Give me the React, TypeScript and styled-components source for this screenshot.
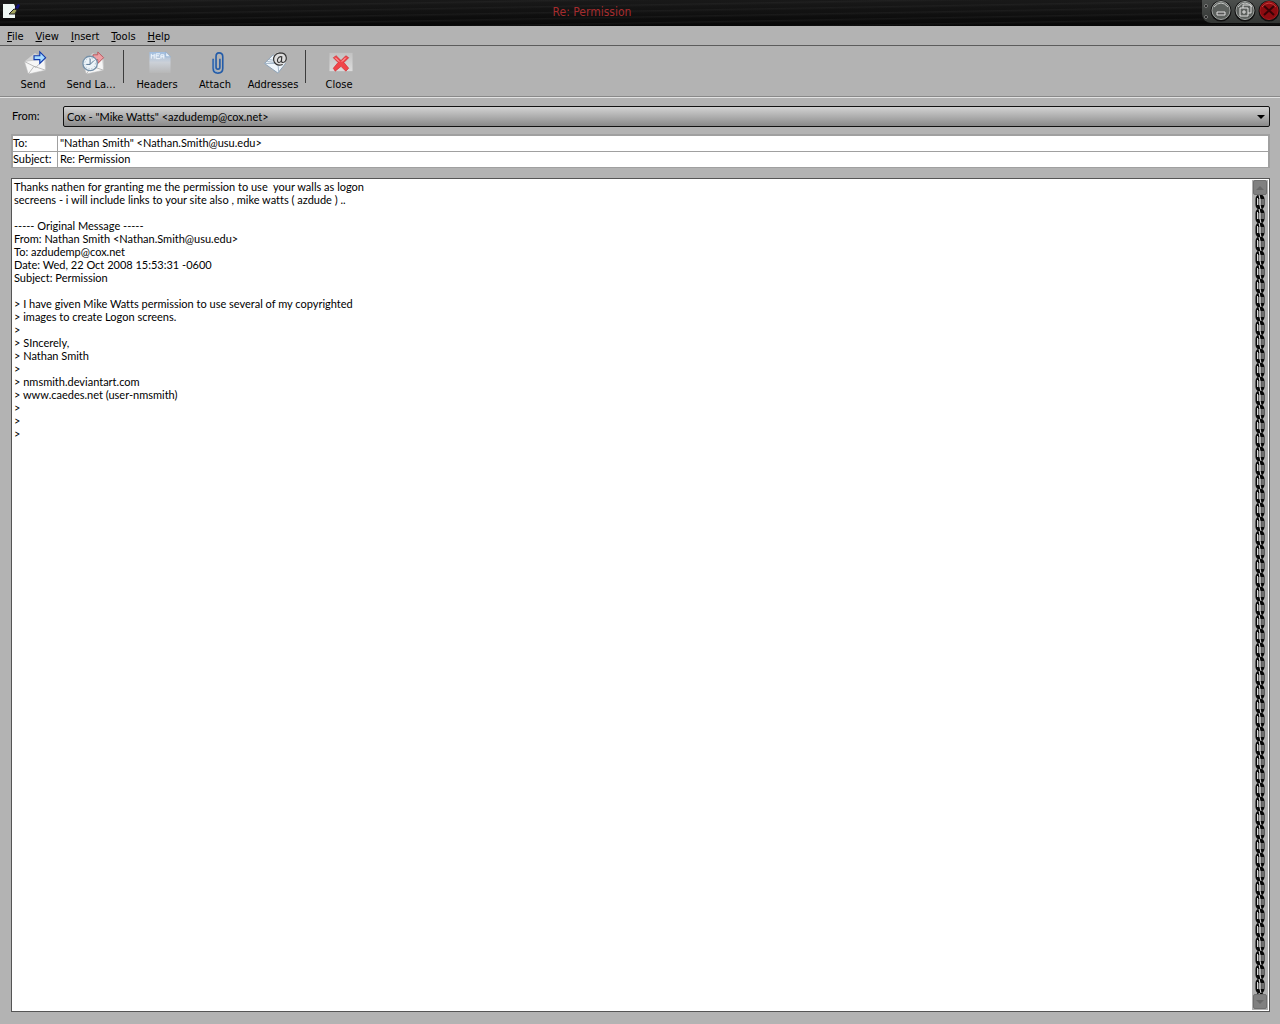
import React from "react";
import styled, { createGlobalStyle } from "styled-components";

const uiFont = `"DejaVu Sans Condensed", "DejaVu Sans", sans-serif`;
const textFont = `Lato, "Liberation Sans", Arial, sans-serif`;

const GlobalStyle = createGlobalStyle`
  * { box-sizing: border-box; }
  body { margin: 0; background: #b3b3b3; color: #000; font: 11px/13px ${textFont}; }
  button, input, select, textarea { font: inherit; color: inherit; margin: 0; border-radius: 0; }
`;

const Window = styled.div`
  display: flex;
  flex-direction: column;
  min-height: 100vh;
  background: #b3b3b3;
`;

const TitleBar = styled.header`
  display: grid;
  grid-template-columns: 78px 1fr 78px;
  height: 26px;
  background:
    repeating-linear-gradient(179deg, transparent 0 3px, rgba(60, 60, 60, 0.22) 4px, transparent 6px),
    linear-gradient(#191919, #111 50%, #060606);
`;

const AppIcon = styled.svg`
  width: 20px;
  height: 20px;
  margin: 1px 0 0 2px;
`;

const Title = styled.h1`
  margin: 0;
  padding-right: 96px;
  text-align: center;
  font: 12px/24px ${uiFont};
  color: #a62c2e;
`;

const WindowControls = styled.div`
  display: flex;
  align-items: flex-start;
  height: 23px;
  overflow: hidden;
  background: linear-gradient(#4c4f4d, #333634);
  border-bottom-left-radius: 9px;
`;

const Rivets = styled.svg`
  width: 7px;
  height: 22px;
  flex: none;
`;

const ControlButton = styled.button`
  width: 24px;
  height: 22px;
  padding: 0;
  border: 0;
  background: none;
  flex: none;
  svg { display: block; width: 24px; height: 22px; }
`;

const MenuBar = styled.nav`
  display: flex;
  gap: 12px;
  height: 20px;
  padding: 3px 7px 0;
  border-bottom: 1px solid #5c5c5c;
`;

const MenuItem = styled.button`
  padding: 0;
  border: 0;
  background: none;
  font: 11px/16px ${uiFont};
`;

const ToolBar = styled.div`
  display: flex;
  height: 52px;
  padding: 4px;
  border-bottom: 1px solid #e2e2e2;
  box-shadow: inset 0 -1px #898989;
`;

const Tool = styled.button`
  display: flex;
  flex-direction: column;
  align-items: center;
  gap: 2px;
  width: 58px;
  padding: 0;
  border: 0;
  background: none;
  font: 11px/16px ${uiFont};
  white-space: nowrap;
  svg { width: 26px; height: 26px; margin-left: 4px; }
`;

const Divider = styled.div`
  width: 1px;
  height: 33px;
  margin: 0 4px 0 3px;
  background: #3c3c3c;
`;

const Composer = styled.main`
  flex: 1;
  display: flex;
  flex-direction: column;
  padding: 8px 10px 12px 11px;
  font-variant-ligatures: none;
`;

const FromRow = styled.div`
  display: flex;
  align-items: flex-start;
  height: 21px;
  label { width: 52px; padding-left: 1px; line-height: 19px; }
`;

const SelectBox = styled.div`
  flex: 1;
  position: relative;
  svg { position: absolute; right: 5px; top: 9px; width: 8px; height: 4px; pointer-events: none; }
`;

const Select = styled.select`
  display: block;
  width: 100%;
  height: 21px;
  padding: 0 20px 1px 3px;
  appearance: none;
  border: 1px solid #111;
  border-radius: 2px;
  background: linear-gradient(#d2d2d2, #b2b2b2 45%, #8a8a8a);
`;

const Fields = styled.div`
  display: grid;
  grid-template-columns: 44px 1fr;
  grid-auto-rows: 15px;
  gap: 1px;
  margin-top: 7px;
  border: 2px solid #a0a0a0;
  border-width: 2px 2px 1px;
  background: #a0a0a0;
  label { background: #fff; line-height: 13px; }
`;

const Field = styled.input`
  min-width: 0;
  height: 15px;
  padding: 0 2px 2px;
  border: 0;
  outline: 0;
  background: #fff;
  line-height: 13px;
`;

const Editor = styled.div`
  flex: 1;
  display: flex;
  margin-top: 10px;
  padding: 1px;
  border: 1px solid #555;
  background: #fff;
`;

const Message = styled.textarea`
  flex: 1;
  min-width: 0;
  padding: 0 1px;
  border: 0;
  outline: 0;
  resize: none;
  overflow: hidden;
  background: #fff;
  line-height: 13px;
`;

const ScrollBar = styled.div`
  display: flex;
  flex-direction: column;
  width: 16px;
  padding-bottom: 1px;
  background: #b0b0b0;
`;

const ScrollButton = styled.button`
  height: 15px;
  padding: 0;
  border: 1px solid #707070;
  border-radius: 2px;
  background: #808080;
  margin: 0 1px;
  svg { display: block; width: 8px; height: 4px; margin: auto; }
`;

const Chain = styled.svg`
  flex: 1;
  width: 16px;
  min-height: 0;
`;

const message = `Thanks nathen for granting me the permission to use  your walls as logon
secreens - i will include links to your site also , mike watts ( azdude ) ..

----- Original Message -----
From: Nathan Smith <Nathan.Smith@usu.edu>
To: azdudemp@cox.net
Date: Wed, 22 Oct 2008 15:53:31 -0600
Subject: Permission

> I have given Mike Watts permission to use several of my copyrighted
> images to create Logon screens.
>
> SIncerely,
> Nathan Smith
>
> nmsmith.deviantart.com
> www.caedes.net (user-nmsmith)
>
>
>`;

const Envelope = () => (
  <>
    <path d="m2 12 11-9 11 7v8z" fill="#d3d3d3" />
    <path d="m2 12 21-3 1 12-18 4z" fill="#f6f6f6" stroke="#bcbcbc" strokeWidth=".6" />
    <path d="m2 12 12 6 9-9M6 25l6-8 12 4" fill="none" stroke="#aaa" strokeWidth=".8" />
  </>
);

const SendIcon = () => (
  <svg viewBox="0 0 26 26" aria-hidden="true">
    <Envelope />
    <path d="M12 6h6V2l6 6-6 6v-4h-6z" fill="#a9dcff" stroke="#1039ad" strokeWidth="1.2" />
  </svg>
);

const SendLaterIcon = () => (
  <svg viewBox="0 0 26 26" aria-hidden="true">
    <Envelope />
    <path d="M13 5h5V2l6 6-6 6v-4h-5z" fill="#eda0a5" stroke="#b9585f" />
    <circle cx="10" cy="14" r="7.5" fill="#edf4f9" stroke="#7590a8" strokeWidth="1.4" />
    <circle cx="10" cy="14" r="5.5" fill="none" stroke="#9fb4c6" strokeDasharray="1 2" />
    <path d="M10 9v6H6M10 15l4-4" fill="none" stroke="#52718f" />
  </svg>
);

const HeadersIcon = () => (
  <svg viewBox="0 0 26 26" aria-hidden="true">
    <defs>
      <linearGradient id="sheet" x2="0" y2="1">
        <stop stopColor="#9fbde0" /><stop offset=".5" stopColor="#cbd0d7" /><stop offset="1" stopColor="#b7b7b7" />
      </linearGradient>
    </defs>
    <path d="M3 2h17l5 5v17H3z" fill="url(#sheet)" />
    <path d="M20 2v5h5z" fill="#e8f1fa" stroke="#7ea2cb" strokeWidth=".6" />
    <path d="M5 4v5m0-3h3m0-2v5m6-5h-4v5h4m-4-3h3m2 3V5h3v4m-3-2h3" fill="none" stroke="#f3f9ff" />
  </svg>
);

const AttachIcon = () => (
  <svg viewBox="0 0 26 26" aria-hidden="true">
    <path d="M9 9v10q0 5 5 5 5 0 5-5V7q0-4-4-4-3 0-3 4v11q0 2 2 2t2-2V9" fill="none" stroke="#245ca8" strokeWidth="1.7" />
    <path d="M10 10v9q0 4 4 4" fill="none" stroke="#77a8df" strokeWidth=".7" />
  </svg>
);

const AddressIcon = () => (
  <svg viewBox="0 0 26 26" aria-hidden="true">
    <path d="m2 14 9-9 13 9-8 10z" fill="#eef5fb" stroke="#8a9fb4" />
    <path d="m2 14 14 0 1 10M5 12l8 1M7 10l7 1" fill="none" stroke="#a2b5c8" />
    <circle cx="18" cy="9" r="7" fill="#ddd" />
    <path d="M21 15c-11 4-13-11-3-12 9 0 8 10 3 10-2 0-1-4-1-6-4-1-6 5-3 6 2 0 3-3 3-5" fill="none" stroke="#333" strokeWidth="1.2" />
  </svg>
);

const CloseIcon = () => (
  <svg viewBox="0 0 26 26" aria-hidden="true">
    <defs>
      <linearGradient id="plate" x2="0" y2="1">
        <stop stopColor="#c2c2c2" /><stop offset="1" stopColor="#dcdcdc" />
      </linearGradient>
    </defs>
    <path d="M1 3h24v19H1z" fill="url(#plate)" />
    <path d="m5 8 3-2 5 5 5-5 3 2-5 5 5 6-3 3-5-5-6 5-2-3 5-6z" fill="#f0454a" stroke="#d0282e" strokeWidth=".7" />
    <path d="m7 8 4 4M18 8l-4 4" stroke="#ffc2bf" />
  </svg>
);

type Kind = "minimize" | "restore" | "close";

const ControlIcon = ({ kind }: { kind: Kind }) => (
  <svg viewBox="0 0 24 22" aria-hidden="true">
    <circle cx="12" cy="11" r="10.5" fill="#111" />
    <circle cx="12" cy="10.5" r="9" fill={kind === "close" ? "#8c0b10" : "#5c605d"} stroke={kind === "close" ? "#a81a1e" : "#a2a6a3"} />
    <path d="M5 7q7-8 14 0" fill="none" stroke={kind === "close" ? "#c8403e" : "#c7c9c7"} />
    {kind === "minimize" && <path d="M8 12h8v3H8z" fill="#555" stroke="#e1e1e1" />}
    {kind === "restore" && <path d="M10 8V5h8v8h-3M7 8h8v8H7zm3 3h2v2h-2z" fill="none" stroke="#e1e1e1" />}
    {kind === "close" && <path d="m7 6 10 9M17 6 7 15" stroke="#380306" strokeWidth="2" />}
  </svg>
);

const tools = [
  { label: "Send", Icon: SendIcon },
  { label: "Send La...", Icon: SendLaterIcon, divider: true },
  { label: "Headers", Icon: HeadersIcon },
  { label: "Attach", Icon: AttachIcon },
  { label: "Addresses", Icon: AddressIcon, divider: true },
  { label: "Close", Icon: CloseIcon },
];

export default function App() {
  return (
    <Window>
      <GlobalStyle />
      <TitleBar>
        <AppIcon viewBox="0 0 20 20" aria-hidden="true">
          <path d="M1 3h11l1 2v12H1z" fill="#eff7f4" />
          <path d="m7 13 5-5 3 1-2 4z" fill="#a3a65f" stroke="#222" />
          <path d="m13 7 3-4 2 1-2 4z" fill="#12127d" />
        </AppIcon>
        <Title>Re: Permission</Title>
        <WindowControls>
          <Rivets viewBox="0 0 7 22" aria-hidden="true">
            <g fill="#090909" stroke="#a0a0a0" strokeWidth=".7"><circle cx="4" cy="6" r="1.5" /><circle cx="4" cy="17" r="1.5" /></g>
          </Rivets>
          {(["minimize", "restore", "close"] as Kind[]).map((kind) => (
            <ControlButton key={kind} aria-label={kind}><ControlIcon kind={kind} /></ControlButton>
          ))}
        </WindowControls>
      </TitleBar>
      <MenuBar>
        {["File", "View", "Insert", "Tools", "Help"].map((name) => (
          <MenuItem key={name}><u>{name[0]}</u>{name.slice(1)}</MenuItem>
        ))}
      </MenuBar>
      <ToolBar>
        {tools.map(({ label, Icon, divider }) => (
          <React.Fragment key={label}>
            <Tool><Icon />{label}</Tool>
            {divider && <Divider />}
          </React.Fragment>
        ))}
      </ToolBar>
      <Composer>
        <FromRow>
          <label htmlFor="from">From:</label>
          <SelectBox>
            <Select id="from"><option>Cox - "Mike Watts" &lt;azdudemp@cox.net&gt;</option></Select>
            <svg viewBox="0 0 8 4" aria-hidden="true"><path d="M0 0h8L4 4z" /></svg>
          </SelectBox>
        </FromRow>
        <Fields>
          <label htmlFor="to">To:</label>
          <Field id="to" defaultValue={'"Nathan Smith" <Nathan.Smith@usu.edu>'} />
          <label htmlFor="subject">Subject:</label>
          <Field id="subject" defaultValue="Re: Permission" />
        </Fields>
        <Editor>
          <Message aria-label="Message" spellCheck={false} defaultValue={message} />
          <ScrollBar>
            <ScrollButton aria-label="Scroll up"><svg viewBox="0 0 8 4" aria-hidden="true"><path d="m0 4 4-4 4 4z" fill="#686868" /></svg></ScrollButton>
            <Chain aria-hidden="true">
              <defs>
                <pattern id="links" width="16" height="14" patternUnits="userSpaceOnUse">
                  <rect x="5" y="1" width="6" height="12" rx="3" fill="none" stroke="#080808" strokeWidth="3" />
                  <path d="M5.500 3v7M11 4v6" stroke="#d8d8d8" />
                  <path d="M8 0v4M8 10v4" stroke="#080808" strokeWidth="4" />
                  <path d="m8 10 1 4M7 0l1 4" stroke="#e8e8e8" />
                </pattern>
              </defs>
              <rect width="16" height="100%" fill="url(#links)" />
            </Chain>
            <ScrollButton aria-label="Scroll down"><svg viewBox="0 0 8 4" aria-hidden="true"><path d="m0 0 4 4 4-4z" fill="#686868" /></svg></ScrollButton>
          </ScrollBar>
        </Editor>
      </Composer>
    </Window>
  );
}
